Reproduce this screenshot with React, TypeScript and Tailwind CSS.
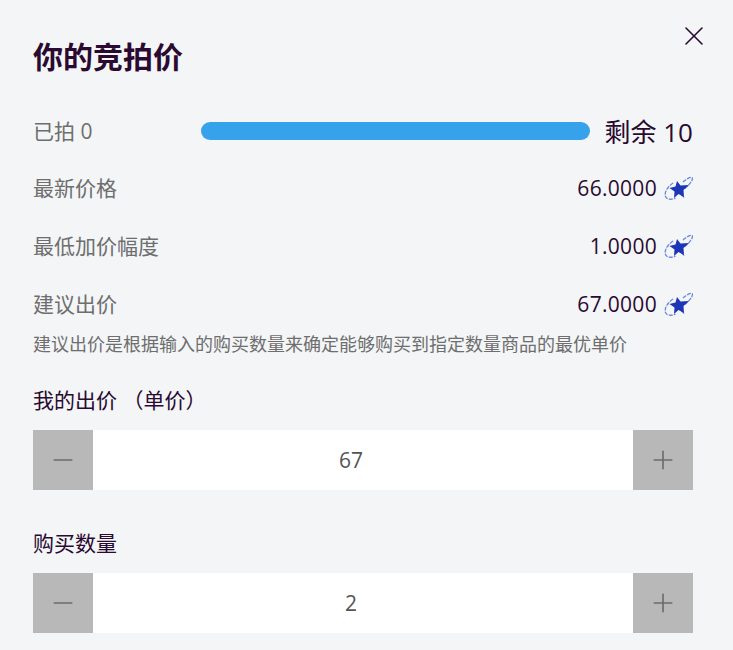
import { X, Minus, Plus } from 'lucide-react';

function TokenIcon() {
  return (
    <svg width="30" height="26" viewBox="-1 0 30 26" className="mr-[-1px] shrink-0 blur-[0.4px]">
      <g fill="none" stroke="#6b86dc" strokeWidth="1.300" strokeDasharray="3 2.200" strokeLinecap="round">
        <path d="M7.700 7.300 C3 10.500 -0.500 15.500 0.300 20 C1 23.500 6 24 10 22.300" />
        <path d="M18.300 5.700 C21 3.500 25 0.800 26.700 1.300 C29 2.200 26 7.500 20 12.300" />
        <path d="M16.700 19 L20 22.300" />
      </g>
      <path d="M12 5 L15.500 9.500 L24 9 L18.500 14 L19 21 L13.500 18 L9 22 L9.500 15.500 L4.500 12 L10.500 10.500 Z" fill="#1d36b8" />
    </svg>
  );
}

function PriceRow({ label, value }: { label: string; value: string }) {
  return (
    <div className="flex h-[32px] items-center justify-between">
      <span className="text-[21px] text-[#6e6e6e]">{label}</span>
      <span className="flex items-center gap-[7px] text-[21px] tracking-[0.3px] text-[#2a0a30]">
        {value}
        <TokenIcon />
      </span>
    </div>
  );
}

function Stepper({ value }: { value: string }) {
  return (
    <div className="flex h-[60px] items-stretch bg-white">
      <button className="flex w-[60px] items-center justify-center bg-[#b8b8b8] text-[#6b6b6b]">
        <Minus size={30} strokeWidth={1.3} />
      </button>
      <div className="flex flex-1 items-center justify-center pr-[24px] pt-[2px] text-[21px] text-[#555555]">{value}</div>
      <button className="flex w-[60px] items-center justify-center bg-[#b8b8b8] text-[#6b6b6b]">
        <Plus size={30} strokeWidth={1.3} />
      </button>
    </div>
  );
}

export default function App() {
  return (
    <div
      className="relative h-[650px] overflow-hidden bg-[#f3f5f7] pl-[33px] pr-[40px] pt-[36px]"
      style={{ fontFamily: '"Open Sans", "Noto Sans CJK SC", sans-serif' }}
    >
      <button className="absolute right-[23px] top-[20px] text-[#2a0a30]">
        <X size={32} strokeWidth={1.2} />
      </button>

      <h2 className="text-[30px] font-bold leading-[42px] text-[#2a0a30]">你的竞拍价</h2>

      <div className="mt-[38px] flex h-[32px] items-center">
        <span className="w-[168px] text-[21px] text-[#6e6e6e]">已拍 0</span>
        <div className="mb-[2px] h-[18px] w-[389px] rounded-full bg-[#36a2eb]" />
        <span className="ml-auto text-[26px] text-[#2a0a30]">剩余 10</span>
      </div>

      <div className="mt-[25px] flex flex-col gap-[26px]">
        <PriceRow label="最新价格" value="66.0000" />
        <PriceRow label="最低加价幅度" value="1.0000" />
        <PriceRow label="建议出价" value="67.0000" />
      </div>

      <p className="mt-[10px] text-[18px] leading-[27px] text-[#6e6e6e]">
        建议出价是根据输入的购买数量来确定能够购买到指定数量商品的最优单价
      </p>

      <div className="mt-[26px] text-[21px] leading-[32px] text-[#2a0a30]">我的出价 （单价）</div>
      <div className="mt-[14px]">
        <Stepper value="67" />
      </div>

      <div className="mt-[37px] text-[21px] leading-[32px] text-[#2a0a30]">购买数量</div>
      <div className="mt-[14px]">
        <Stepper value="2" />
      </div>
    </div>
  );
}
